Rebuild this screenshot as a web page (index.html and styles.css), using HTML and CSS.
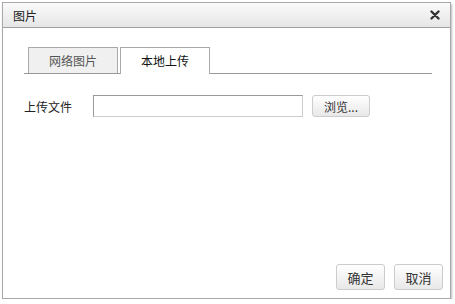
FILE: index.html
```html
<!DOCTYPE html>
<html lang="zh-CN">
<head>
    <meta charset="UTF-8">
    <title>图片</title>
    <link rel="stylesheet" href="styles.css">
</head>
<body>
    <div class="dialog">
        <div class="dialog-title">
            <span>图片</span>
            <svg class="close" width="10" height="10" viewBox="0 0 10 10"><path d="M1.5 1.5 L8.5 8.5 M8.5 1.5 L1.5 8.5" stroke="#333" stroke-width="2.4" stroke-linecap="round"/></svg>
        </div>
        <div class="dialog-body">
            <div class="tabs">
                <div class="tab">网络图片</div>
                <div class="tab active">本地上传</div>
            </div>
            <div class="form-row">
                <label>上传文件</label>
                <input type="text" class="file-input">
                <button class="btn">浏览...</button>
            </div>
        </div>
        <div class="dialog-footer">
            <button class="btn btn-lg">确定</button>
            <button class="btn btn-lg">取消</button>
        </div>
    </div>
</body>
</html>
```

FILE: styles.css
```css
body { margin: 0; font-family: "Noto Sans CJK SC", "Liberation Sans", sans-serif; font-size: 12px; color: #222; background: #fff; }
.dialog { margin: 2px 2px 0 2px; width: 449px; height: 297px; border: 1px solid #a8a8a8; box-shadow: 1px 2px 2px #bbb; display: flex; flex-direction: column; box-sizing: border-box; }
.dialog-title { height: 24px; display: flex; align-items: center; justify-content: space-between; padding: 0 10px 0 10px; background: linear-gradient(#fafafa, #e6e6e6); border-bottom: 1px solid #a0a0a0; }
.close { display: block; }
.dialog-body { flex: 1; padding: 19px 18px 0 21px; }
.tabs { display: flex; gap: 2px; padding-left: 4px; border-bottom: 1px solid #999; height: 26px; }
.tab { width: 90px; height: 26px; box-sizing: border-box; border: 1px solid #aaa; border-bottom: none; background: #f0f0f0; color: #555; text-align: center; line-height: 25px; font-size: 12px; }
.tab.active { background: #fff; color: #111; height: 27px; }
.form-row { display: flex; align-items: center; margin-top: 21px; }
.form-row label { width: 69px; }
.file-input { width: 210px; height: 22px; box-sizing: border-box; border: 1px solid #ccc; border-top-color: #999; border-left-color: #999; margin: 0; padding: 0 3px; }
.btn { font-family: inherit; font-size: 12px; color: #333; border: 1px solid #ccc; border-radius: 3px; background: linear-gradient(#fff, #e8e8e8); height: 22px; width: 58px; margin-left: 9px; padding: 0; }
.dialog-footer { display: flex; justify-content: flex-end; gap: 9px; padding: 0 7px 8px 0; }
.btn-lg { width: 49px; height: 26px; margin-left: 0; font-size: 13px; }
```
